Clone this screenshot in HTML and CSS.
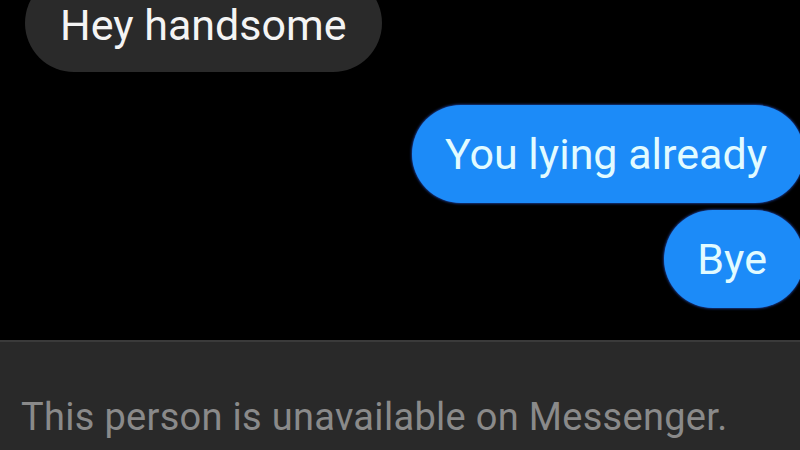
FILE: index.html
```html
<!DOCTYPE html>
<html>
<head>
<meta charset="utf-8">
<link rel="stylesheet" href="styles.css">
</head>
<body>
<div class="screen">
  <div class="thread">
    <div class="row row-in"><div class="bubble in">Hey handsome</div></div>
    <div class="row row-out first"><div class="bubble out">You lying already</div></div>
    <div class="row row-out"><div class="bubble out">Bye</div></div>
  </div>
  <div class="footer">This person is unavailable on Messenger.</div>
</div>
</body>
</html>
```
FILE: styles.css
```css
* { box-sizing: border-box; }
html, body { margin: 0; padding: 0; background: #000; }
body { width: 800px; height: 450px; overflow: hidden; font-family: Roboto, "Liberation Sans", sans-serif; }
.screen { display: flex; flex-direction: column; height: 450px; }
.thread { flex: 1; display: flex; flex-direction: column; }
.row { display: flex; }
.row-in { justify-content: flex-start; padding-left: 25px; margin-top: -26px; }
.row-out { justify-content: flex-end; margin-right: -4px; margin-top: 7px; }
.row-out.first { margin-top: 33px; }
.bubble { height: 98px; border-radius: 49px; display: flex; align-items: center; font-size: 43px; line-height: 1; }
.in { background: #2a2a2a; color: #f4f4f4; padding: 4px 30px 0 35px; width: 357px; }
.out { background: #1c8bf8; color: #e2fbff; padding: 0 37px 0 33px; box-shadow: 0 0 3px #2f6cff; }
.footer { height: 110px; background: #292929; border-top: 2px solid #3a3a3a; color: #8a8a8a; font-size: 38px; padding: 53px 0 0 21px; letter-spacing: 0.3px; white-space: nowrap; }
```
